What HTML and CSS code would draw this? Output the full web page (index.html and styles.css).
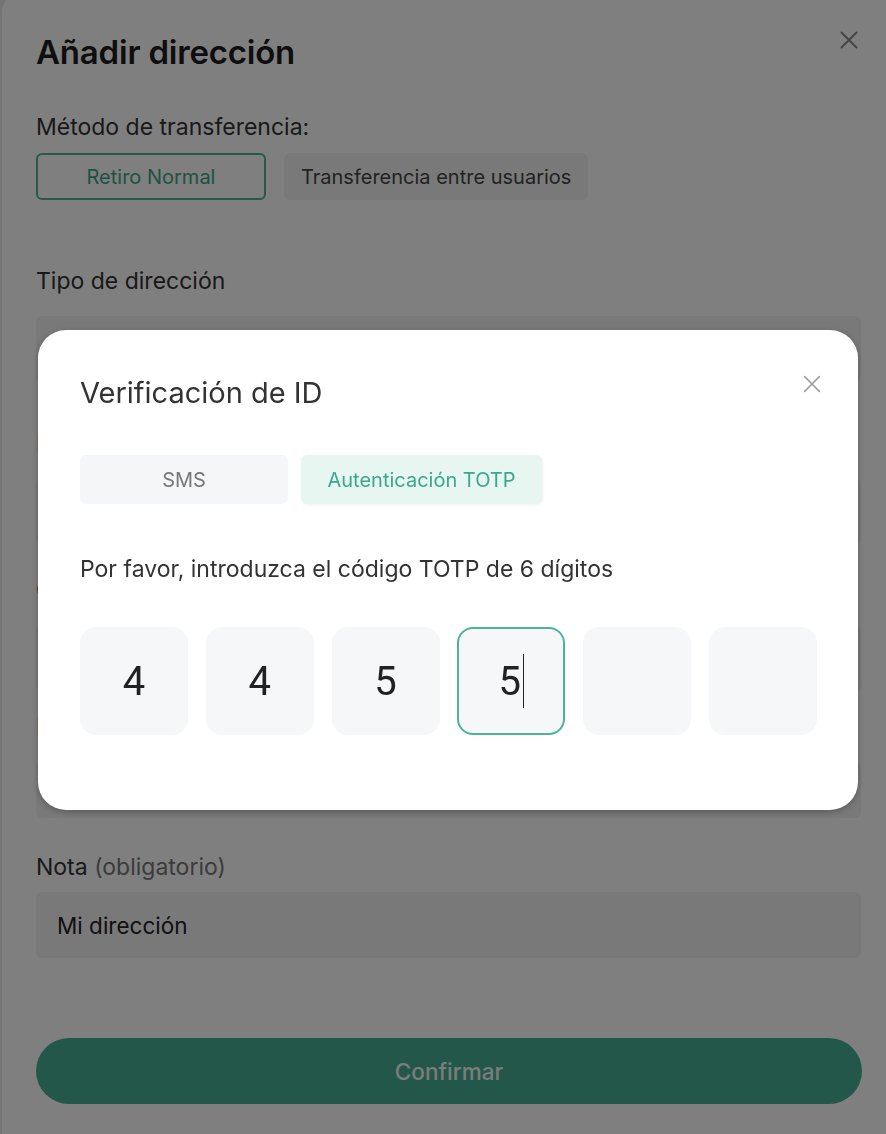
FILE: index.html
```html
<!DOCTYPE html>
<html lang="es">
<head>
<meta charset="utf-8">
<title>Añadir dirección</title>
<link rel="stylesheet" href="styles.css">
</head>
<body>
<div class="page">
  <section class="sheet">
    <header class="sheet-head">
      <h1 class="sheet-title">Añadir dirección</h1>
      <svg class="sheet-close" width="18" height="18" viewBox="0 0 18 18"><path d="M1.5 1.5L16.5 16.5M16.5 1.5L1.5 16.5" stroke="#8a8a8a" stroke-width="2" fill="none" stroke-linecap="round"/></svg>
    </header>
    <div class="label label-method">Método de transferencia:</div>
    <div class="method-row">
      <button class="method method-active">Retiro Normal</button>
      <button class="method">Transferencia entre usuarios</button>
    </div>
    <div class="label label-type">Tipo de dirección</div>
    <div class="field"></div>
    <div class="label label-gap1">Moneda</div>
    <div class="field"></div>
    <div class="label label-gap2">Cadena</div>
    <div class="field"></div>
    <div class="label label-gap3">Dirección</div>
    <div class="field field-short"></div>
    <div class="label label-note">Nota <span class="muted">(obligatorio)</span></div>
    <div class="field field-text">Mi dirección</div>
    <button class="confirm">Confirmar</button>
  </section>
</div>

<div class="overlay">
  <div class="dialog">
    <div class="dialog-head">
      <h2 class="dialog-title">Verificación de ID</h2>
      <svg class="dialog-close" width="18" height="18" viewBox="0 0 18 18"><path d="M1.5 1.5L16.5 16.5M16.5 1.5L1.5 16.5" stroke="#9a9a9a" stroke-width="1.6" fill="none" stroke-linecap="round"/></svg>
    </div>
    <div class="tabs">
      <div class="tab">SMS</div>
      <div class="tab tab-active">Autenticación TOTP</div>
    </div>
    <p class="hint">Por favor, introduzca el código TOTP de 6 dígitos</p>
    <div class="otp">
      <div class="cell">4</div>
      <div class="cell">4</div>
      <div class="cell">5</div>
      <div class="cell cell-active">5<span class="caret"></span></div>
      <div class="cell"></div>
      <div class="cell"></div>
    </div>
  </div>
</div>
</body>
</html>
```

FILE: styles.css
```css
* { box-sizing: border-box; }
html, body {
  margin: 0;
  padding: 0;
  width: 886px;
  height: 1134px;
  overflow: hidden;
  background: #e9e9e9;
  font-family: Inter, "Noto Sans", "Liberation Sans", sans-serif;
}
.page {
  padding-left: 2px;
}
.sheet {
  margin-top: -6px;
  width: 910px;
  height: 1160px;
  background: #ffffff;
  border-radius: 18px;
  padding: 38px 47px 0 34px;
}
.sheet-head {
  display: flex;
  justify-content: space-between;
  align-items: flex-start;
}
.sheet-title {
  margin: 0;
  font-size: 33px;
  line-height: 40px;
  font-weight: 600;
  color: #1c1c1c;
  letter-spacing: -0.2px;
}
.sheet-close {
  margin-top: -1px;
  margin-right: 7px;
}
.label {
  font-size: 23px;
  line-height: 28px;
  color: #333;
}
.label-method { margin-top: 41px; }
.method-row {
  display: flex;
  gap: 18px;
  margin-top: 12px;
}
.method {
  height: 47px;
  border-radius: 6px;
  font-family: inherit;
  font-size: 20px;
  padding: 0 15px;
  border: 2px solid transparent;
  background: #f3f3f3;
  color: #444;
}
.method-active {
  width: 230px;
  background: #ffffff;
  border-color: #4ab293;
  color: #3ba485;
}
.label-type { margin-top: 67px; }
.field {
  margin-top: 21px;
  height: 66px;
  width: 825px;
  border-radius: 6px;
  background: #f2f2f2;
  font-size: 22.5px;
  color: #222;
  display: flex;
  align-items: center;
  padding-left: 21px;
}
.field-short { height: 56px; }
.field-text { margin-top: 11px; }
.label-gap1 { margin-top: 47px; }
.label-gap2 { margin-top: 32px; }
.label-gap3 { margin-top: 22px; }
.label-note { margin-top: 35px; }
.muted { color: #777; }
.confirm {
  margin-top: 80px;
  width: 826px;
  height: 66px;
  border: none;
  border-radius: 33px;
  background: #46ae92;
  color: #f4faf8;
  font-family: inherit;
  font-size: 22.5px;
  font-weight: 500;
}

.overlay {
  position: fixed;
  inset: 0;
  background: rgba(0, 0, 0, 0.5);
  padding: 330px 0 0 38px;
}
.dialog {
  width: 820px;
  height: 480px;
  background: #ffffff;
  border-radius: 28px;
  box-shadow: 0 2px 6px rgba(0, 0, 0, 0.25);
  padding: 44px 40px 0 42px;
}
.dialog-head {
  display: flex;
  justify-content: space-between;
  align-items: flex-start;
}
.dialog-title {
  margin: 0;
  font-size: 29px;
  line-height: 38px;
  font-weight: 400;
  color: #333;
}
.dialog-close {
  margin-top: 1px;
  margin-right: -3px;
}
.tabs {
  display: flex;
  gap: 13px;
  margin-top: 43px;
}
.tab {
  height: 49px;
  border-radius: 6px;
  background: #f5f6f8;
  color: #777;
  font-size: 20px;
  display: flex;
  align-items: center;
  justify-content: center;
  width: 208px;
}
.tab-active {
  width: 241px;
  background: #e7f6f1;
  color: #3ba88d;
  box-shadow: 1px 1px 3px rgba(0, 0, 0, 0.06);
}
.hint {
  margin: 51px 0 0;
  font-size: 23px;
  line-height: 28px;
  color: #333;
}
.otp {
  display: flex;
  gap: 17.8px;
  margin-top: 44px;
}
.cell {
  flex: 0 0 108px;
  height: 108px;
  border-radius: 16px;
  background: #f6f7f9;
  display: flex;
  align-items: center;
  justify-content: center;
  font-family: Roboto, "Liberation Sans", sans-serif;
  font-size: 40px;
  color: #222;
}
.cell-active {
  border: 2px solid #4db39b;
}
.caret {
  display: inline-block;
  width: 1.5px;
  height: 54px;
  background: #222;
  margin-left: 2px;
}
```
